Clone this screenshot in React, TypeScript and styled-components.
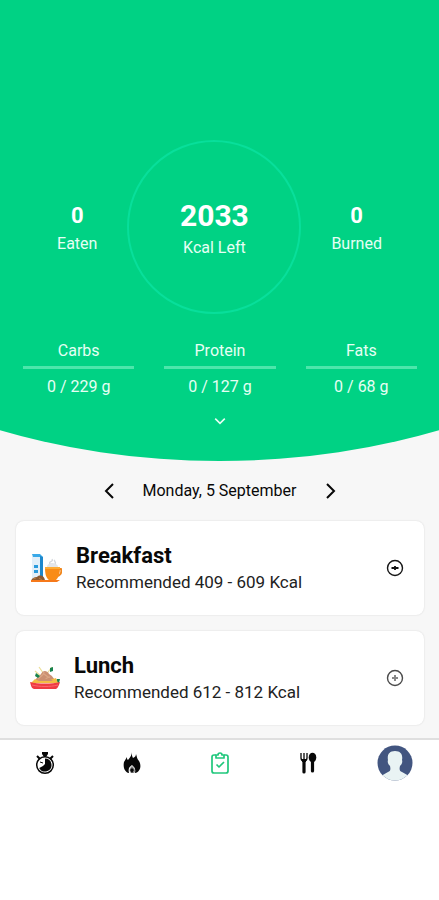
import React from "react";
import styled, { createGlobalStyle } from "styled-components";

const GlobalStyle = createGlobalStyle`
  *, *::before, *::after { box-sizing: border-box; }
  body {
    margin: 0;
    background: #ffffff;
    color: #111111;
    font-family: Roboto, "Liberation Sans", sans-serif;
    font-size: 16px;
    line-height: 20px;
  }
  h2, p { margin: 0; }
  button {
    border: 0;
    padding: 0;
    background: none;
    color: inherit;
    font: inherit;
    cursor: pointer;
  }
  svg { display: block; }
`;

const Screen = styled.main`
  background: #f7f7f7;
`;

const Summary = styled.header`
  display: flex;
  flex-direction: column;
  padding-top: 140px;
  padding-bottom: 32px;
  background: #00d284;
  color: #ffffff;
  clip-path: ellipse(139% 100% at 50% 0);
`;

const Energy = styled.section`
  display: flex;
  align-items: center;
  justify-content: center;
  gap: 30px;
`;

const Stat = styled.div`
  display: flex;
  flex-direction: column;
  align-items: center;
  gap: 6px;
  padding-top: 4px;
  color: #e6fff4;
`;

const StatValue = styled.strong<{ $large?: boolean }>`
  color: #ffffff;
  font-size: ${({ $large }) => ($large ? 30 : 22)}px;
  line-height: ${({ $large }) => ($large ? 32 : 24)}px;
  font-weight: 700;
`;

const Ring = styled.div`
  display: flex;
  align-items: center;
  justify-content: center;
  width: 174px;
  height: 174px;
  border: 2px solid #08df9b;
  border-radius: 50%;
`;

const Macros = styled.section`
  display: grid;
  grid-template-columns: repeat(3, 1fr);
  gap: 30px;
  padding: 27px 22px 0 23px;
`;

const Macro = styled.div`
  display: flex;
  flex-direction: column;
  align-items: center;
  gap: 5px;
  color: #e6fff4;
`;

const Track = styled.progress`
  appearance: none;
  display: block;
  width: 100%;
  height: 3px;
  margin-bottom: 3px;
  border: 0;
  background: #4ce6ab;
  &::-webkit-progress-bar { background: #4ce6ab; }
  &::-webkit-progress-value { background: #ffffff; }
`;

const ExpandButton = styled.button`
  align-self: center;
  margin-top: 16px;
  color: #e6fff4;
`;

const DateBar = styled.div`
  display: flex;
  align-items: center;
  justify-content: center;
  gap: 24px;
  padding: 20px 0;
  color: #080808;
`;

const Meals = styled.section`
  display: flex;
  flex-direction: column;
  gap: 16px;
  padding: 0 15px 13px 16px;
`;

const MealCard = styled.article`
  display: flex;
  align-items: center;
  gap: 14px;
  min-height: 94px;
  padding: 0 20px 0 14px;
  border-radius: 8px;
  background: #ffffff;
  box-shadow: 0 0 2px rgba(0, 0, 0, 0.14);
`;

const MealText = styled.div`
  flex: 1;
`;

const MealName = styled.h2`
  font-size: 22px;
  line-height: 28px;
  font-weight: 700;
  color: #080808;
`;

const MealHint = styled.p`
  line-height: 24px;
  font-size: 17px;
  color: #222222;
`;

const TabBar = styled.nav`
  display: grid;
  grid-template-columns: repeat(5, 1fr);
  align-items: center;
  justify-items: center;
  padding: 5px 0 6px 1px;
  border-top: 2px solid #dfdfdf;
  background: #ffffff;
`;

const TabButton = styled.button<{ $active?: boolean }>`
  color: ${({ $active }) => ($active ? "#20c77c" : "#080808")};
`;

const Chevron = ({ size, d, width }: { size: number; d: string; width: number }) => (
  <svg width={size} height={size} viewBox="0 0 20 20" fill="none" stroke="currentColor" strokeWidth={width} aria-hidden="true">
    <path d={d} />
  </svg>
);

const BreakfastIcon = () => (
  <svg width="32" height="30" viewBox="0 0 32 30" aria-hidden="true">
    <path d="M2 3h8v25H2z" fill="#e2eff9" />
    <path d="M2 1h8l3 3H3z" fill="#3aa9e8" />
    <path d="M10 3l3 1v23h-3z" fill="#1e88cc" />
    <path d="M4 12h4v3H4zM4 17h4v3H4z" fill="#2b9bdd" />
    <path d="M17 14c0-3 3-4 5-4s6 1 6 4z" fill="#e3e6ea" />
    <path d="M20 11c-2-3 4-2 2-5M25 11c2-2-2-3 0-4" fill="none" stroke="#d3d7dc" strokeWidth="1.3" />
    <path d="M28 16h3c1 4-1 7-4 7" fill="none" stroke="#f0861c" strokeWidth="1.8" />
    <path d="M15 14h15c0 6-1 10-4 13h-7c-3-2-4-6-4-13z" fill="#f98c16" />
    <path d="M15 14h15v2H15z" fill="#ffac35" />
    <path d="M1 28c1-3 3-4 6-4 3-3 8-1 8 4z" fill="#8a5a34" />
    <path d="M3 26l3-1M9 25l3 2" stroke="#ba7d42" />
    <path d="M1 27h29l-3 2H1z" fill="#f6791a" />
  </svg>
);

const LunchIcon = () => (
  <svg width="30" height="30" viewBox="0 0 30 30" aria-hidden="true">
    <path d="M9 4l7 10M22 4l-7 9M5 8l8 7" stroke="#ecdf96" strokeWidth="1.2" />
    <path d="M4 20c1-5 5-6 7-9 2-5 7-3 8 0 4 2 6 6 7 9z" fill="#cb9072" />
    <path d="M8 16c3-4 6-3 6-7M13 18c4-2 3-4 7-4M14 11l4 3" fill="none" stroke="#dba684" strokeWidth="1.3" />
    <path d="M6 10l4 3-2 2-3-2zM20 5l3-1v4l-3 1zM27 16h3l-1 4-4-1z" fill="#18824d" />
    <path d="M1 20l4-4 4 2 6-2 5 1 6-2 2 5z" fill="#f2bd43" />
    <path d="M9 18c2-3 10-3 14 0z" fill="#cb9072" />
    <path d="M0 19c8 2 22 2 30 0-1 3-2 6-4 7H4c-3-1-3-4-4-7z" fill="#ef3b42" />
    <path d="M2 22c8 2 18 2 26 0" fill="none" stroke="#fb666b" />
  </svg>
);

const ToggleIcon = ({ open }: { open: boolean }) => (
  <svg width="18" height="18" viewBox="0 0 18 18" fill="none" aria-hidden="true">
    <circle cx="9" cy="9" r="7.5" stroke={open ? "#151515" : "#4b4b4b"} strokeWidth="1.4" />
    {open ? (
      <path d="M5.5 9h7M9 7v4" stroke="#111" strokeWidth="1.8" />
    ) : (
      <path d="M9 6v6M6 9h6" stroke="#888" strokeWidth="2" />
    )}
  </svg>
);

const TimerIcon = () => (
  <svg width="22" height="24" viewBox="0 0 22 24" fill="none" aria-hidden="true">
    <path d="M8 1h6v2l-2 3h-2L8 3z" fill="currentColor" />
    <path d="M3 5l3 3M19 5l-3 3" stroke="currentColor" strokeWidth="2" />
    <circle cx="11" cy="14" r="8.300" stroke="currentColor" strokeWidth="1.500" />
    <path d="M11 7.500a6.500 6.500 0 1 1-5.800 9.500L9 15l2-2z" fill="currentColor" />
    <path d="M6 11l3 1" stroke="currentColor" />
  </svg>
);

const FlameIcon = () => (
  <svg width="22" height="24" viewBox="0 0 22 24" aria-hidden="true">
    <path d="M10 1c1 3 1 4 2 6 2-1 3-2 3-4 1 3 1 5 3 7 3 5 1 11-4 12 1-5-1-6-3-8-3 2-4 4-3 8C3 21 2 15 3 11l3-5c0 2 0 2 1 3 2-3 4-4 3-8z" fill="currentColor" />
    <path d="M11 15c-3 3-3 5-1 7h3c2-2 1-4-2-7z" fill="#8c8c8c" />
    <path d="M11 17l2 2-2 3-2-3z" fill="currentColor" />
  </svg>
);

const ClipboardIcon = () => (
  <svg width="22" height="24" viewBox="0 0 22 24" fill="none" stroke="currentColor" strokeWidth="1.7" strokeLinejoin="round" aria-hidden="true">
    <path d="M7 4H5Q3 4 3 6v14q0 2 2 2h12q2 0 2-2V6q0-2-2-2h-2" />
    <path d="M7 7V4h2q0-2 2-2t2 2h2v3z" />
    <path d="M7.500 13.500l2.500 2.500 5-5" />
  </svg>
);

const CutleryIcon = () => (
  <svg width="22" height="24" viewBox="0 0 22 24" fill="none" aria-hidden="true">
    <path d="M4 2v5q0 3 3 3t3-3V2M7 2v9" stroke="currentColor" strokeWidth="1.3" />
    <path d="M5 8h4v3H5z" fill="currentColor" />
    <path d="M7 10v11" stroke="currentColor" strokeWidth="3.200" strokeLinecap="round" />
    <ellipse cx="15.500" cy="6.500" rx="3.800" ry="4.800" fill="currentColor" />
    <path d="M15.500 9v11" stroke="currentColor" strokeWidth="3.200" strokeLinecap="round" />
  </svg>
);

const AvatarIcon = () => (
  <svg width="36" height="36" viewBox="0 0 36 36" aria-hidden="true">
    <defs>
      <clipPath id="avatar-circle">
        <circle cx="18" cy="18" r="17.500" />
      </clipPath>
    </defs>
    <g clipPath="url(#avatar-circle)">
      <path d="M0 0h36v36H0z" fill="#425580" />
      <path d="M18 6c6 0 8 4 7 9 1 3-1 5-2 6-1 4 0 5 2 6l7 4v7H4v-7l7-4c2-1 3-2 2-6-1-1-3-3-2-6-1-5 1-9 7-9z" fill="#e9f3f4" />
    </g>
  </svg>
);

const macros = [
  { name: "Carbs", goal: 229 },
  { name: "Protein", goal: 127 },
  { name: "Fats", goal: 68 },
];

const meals = [
  { name: "Breakfast", range: "409 - 609", Icon: BreakfastIcon, open: true },
  { name: "Lunch", range: "612 - 812", Icon: LunchIcon, open: false },
];

const tabs = [
  { label: "Fasting timer", Icon: TimerIcon },
  { label: "Activity", Icon: FlameIcon },
  { label: "Diary", Icon: ClipboardIcon, active: true },
  { label: "Recipes", Icon: CutleryIcon },
  { label: "Profile", Icon: AvatarIcon },
];

export default function App() {
  return (
    <>
      <GlobalStyle />
      <Screen>
        <Summary>
          <Energy>
            <Stat>
              <StatValue>0</StatValue>
              <span>Eaten</span>
            </Stat>
            <Ring>
              <Stat>
                <StatValue $large>2033</StatValue>
                <span>Kcal Left</span>
              </Stat>
            </Ring>
            <Stat>
              <StatValue>0</StatValue>
              <span>Burned</span>
            </Stat>
          </Energy>
          <Macros>
            {macros.map(({ name, goal }) => (
              <Macro key={name}>
                <label htmlFor={name}>{name}</label>
                <Track id={name} value={0} max={goal} />
                <span>0 / {goal} g</span>
              </Macro>
            ))}
          </Macros>
          <ExpandButton aria-label="Show more">
            <Chevron size={16} width={2} d="M4 7l6 6 6-6" />
          </ExpandButton>
        </Summary>
        <DateBar>
          <button aria-label="Previous day">
            <Chevron size={20} width={2} d="M14 3l-7 7 7 7" />
          </button>
          <time>Monday, 5 September</time>
          <button aria-label="Next day">
            <Chevron size={20} width={2} d="M7 3l7 7-7 7" />
          </button>
        </DateBar>
        <Meals>
          {meals.map(({ name, range, Icon, open }) => (
            <MealCard key={name}>
              <Icon />
              <MealText>
                <MealName>{name}</MealName>
                <MealHint>Recommended {range} Kcal</MealHint>
              </MealText>
              <button aria-label={open ? `Collapse ${name}` : `Add to ${name}`}>
                <ToggleIcon open={open} />
              </button>
            </MealCard>
          ))}
        </Meals>
        <TabBar>
          {tabs.map(({ label, Icon, active }) => (
            <TabButton key={label} aria-label={label} $active={active}>
              <Icon />
            </TabButton>
          ))}
        </TabBar>
      </Screen>
    </>
  );
}
